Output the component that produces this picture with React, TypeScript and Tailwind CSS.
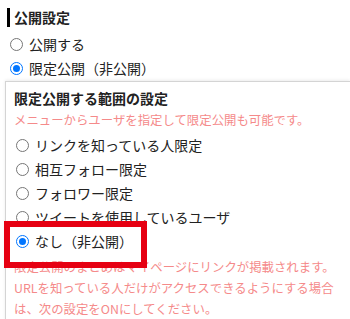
import type { FC } from 'react';

const Radio: FC<{ checked?: boolean; label: string }> = ({ checked, label }) => (
  <div className="flex h-6 items-center gap-[6px]">
    <span
      className={
        checked
          ? 'flex h-[13px] w-[13px] items-center justify-center rounded-full border-[1.5px] border-[#0075ff] bg-white'
          : 'h-[13px] w-[13px] rounded-full border border-[#767676] bg-white'
      }
    >
      {checked && <span className="h-[7px] w-[7px] rounded-full bg-[#0075ff]" />}
    </span>
    <span className="text-[14px] text-[#222]">{label}</span>
  </div>
);

const App: FC = () => {
  return (
    <div
      className="relative h-[319px] w-[350px] overflow-hidden bg-white"
      style={{ fontFamily: '"Noto Sans CJK JP", "Noto Sans", sans-serif' }}
    >
      <div className="pl-[7px] pt-[8px]">
        <h3 className="border-l-[3px] border-black pl-[4px] text-[14px] font-bold leading-[19px] text-[#222]">
          公開設定
        </h3>
        <div className="mt-[5px] pl-[3px]">
          <Radio label="公開する" />
          <Radio checked label="限定公開（非公開）" />
        </div>
      </div>

      <div className="ml-[5px] mt-[1px] border border-r-0 border-[#d4d4d4] bg-white pl-[8px] pt-[6px] shadow-[0_-1px_3px_rgba(0,0,0,0.08)]">
        <h4 className="text-[14px] font-bold leading-[20px] text-[#222]">限定公開する範囲の設定</h4>
        <p className="mt-[2px] text-[12.4px] leading-[21px] text-[#f58a8a]">
          メニューからユーザを指定して限定公開も可能です。
        </p>
        <div className="pl-[2px] pt-[2px]">
          <Radio label="リンクを知っている人限定" />
          <Radio label="相互フォロー限定" />
          <Radio label="フォロワー限定" />
          <Radio label="ツイートを使用しているユーザ" />
          <Radio checked label="なし（非公開）" />
        </div>
        <p className="pr-[8px] pt-[4px] text-[12.4px] leading-[21px] text-[#f58a8a]">
          限定公開のまとめはマイページにリンクが掲載されます。
          <br />
          URLを知っている人だけがアクセスできるようにする場合は、次の設定をONにしてください。
        </p>
      </div>

      <div className="absolute left-[4px] top-[221px] h-[47px] w-[143px] border-[6px] border-[#e60012]" />
    </div>
  );
};

export default App;
